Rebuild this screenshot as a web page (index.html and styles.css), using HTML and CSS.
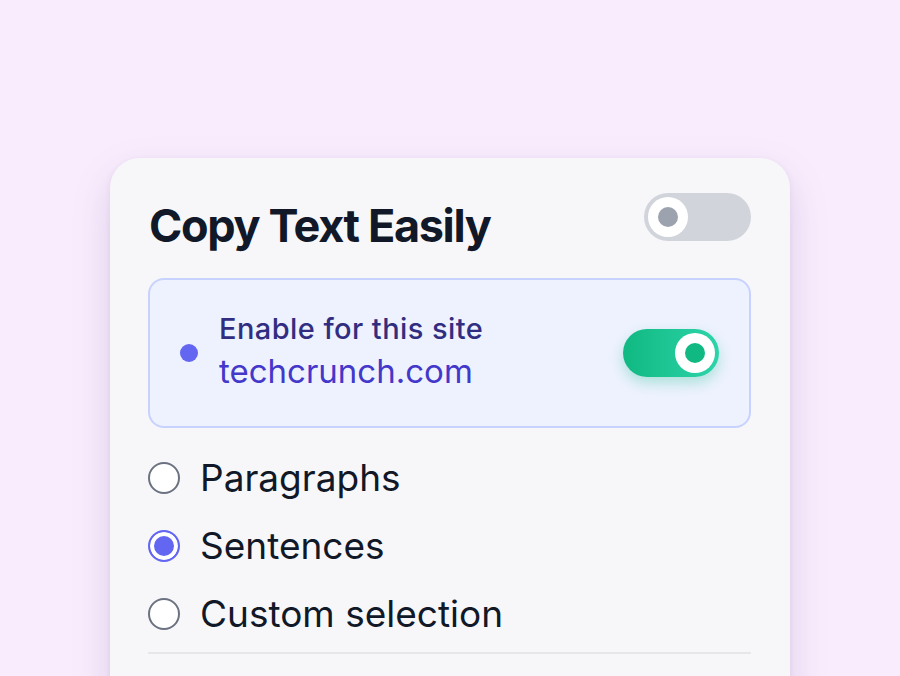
FILE: index.html
```html
<!DOCTYPE html>
<html>
<head>
<meta charset="utf-8">
<link rel="stylesheet" href="styles.css">
</head>
<body>
<div class="card">
  <div class="header">
    <h1 class="title">Copy Text Easily</h1>
    <div class="toggle toggle-off"><span class="knob"></span></div>
  </div>
  <div class="site-box">
    <span class="site-dot"></span>
    <div class="site-text">
      <div class="site-label">Enable for this site</div>
      <div class="site-name">techcrunch.com</div>
    </div>
    <div class="toggle toggle-on"><span class="knob"></span></div>
  </div>
  <div class="options">
    <label class="option"><span class="radio"></span><span>Paragraphs</span></label>
    <label class="option"><span class="radio radio-checked"></span><span>Sentences</span></label>
    <label class="option"><span class="radio"></span><span>Custom selection</span></label>
  </div>
  <div class="divider"></div>
</div>
</body>
</html>
```
FILE: styles.css
```css
* { box-sizing: border-box; }
html, body { margin: 0; height: 100%; }
body {
  background: #f9edfd;
  font-family: Inter, "Noto Sans", sans-serif;
  padding: 158px 110px 0;
  overflow: hidden;
}
.card {
  background: #f7f7fa;
  border-radius: 30px;
  box-shadow: 0 16px 40px rgba(90, 50, 130, 0.16), 0 2px 6px rgba(90, 50, 130, 0.08);
  padding: 35px 39px 0 38px;
  height: 600px;
}
.header {
  display: flex;
  align-items: center;
  justify-content: space-between;
  height: 48px;
}
.title {
  margin: 0;
  font-size: 45px;
  font-weight: 700;
  letter-spacing: -0.03em;
  color: #111827;
  line-height: 1;
  padding-top: 16px;
  padding-left: 1px;
}
.toggle {
  position: relative;
  border-radius: 24px;
  flex: none;
}
.toggle-off {
  width: 107px;
  height: 48px;
  background: #d1d5db;
}
.toggle-off .knob {
  position: absolute;
  left: 4px;
  top: 4px;
  width: 40px;
  height: 40px;
  border-radius: 50%;
  background: #fff;
}
.toggle-off .knob::after {
  content: "";
  position: absolute;
  left: 10px;
  top: 10px;
  width: 20px;
  height: 20px;
  border-radius: 50%;
  background: #9ca3af;
}
.toggle-on {
  width: 96px;
  height: 48px;
  background: linear-gradient(90deg, #10b981, #2dd4aa);
  box-shadow: 0 6px 14px rgba(16, 185, 129, 0.3);
}
.toggle-on .knob {
  position: absolute;
  right: 4px;
  top: 4px;
  width: 40px;
  height: 40px;
  border-radius: 50%;
  background: #fff;
}
.toggle-on .knob::after {
  content: "";
  position: absolute;
  left: 10px;
  top: 10px;
  width: 20px;
  height: 20px;
  border-radius: 50%;
  background: #10b981;
}
.site-box {
  margin-top: 37px;
  height: 150px;
  border: 2px solid #c7d2fe;
  background: #eef2ff;
  border-radius: 16px;
  display: flex;
  align-items: center;
  padding: 0 30px 0 30px;
}
.site-dot {
  width: 18px;
  height: 18px;
  border-radius: 50%;
  background: #6366f1;
  flex: none;
}
.site-text {
  flex: 1;
  margin-left: 21px;
  margin-top: -2px;
}
.site-label {
  font-size: 29px;
  font-weight: 500;
  color: #312e81;
  line-height: 36px;
  letter-spacing: 0.015em;
}
.site-name {
  font-size: 33px;
  font-weight: 400;
  color: #4338ca;
  line-height: 44px;
  padding-top: 2px;
}
.options {
  display: flex;
  flex-direction: column;
  gap: 20px;
  margin-top: 26px;
}
.option {
  display: flex;
  align-items: center;
  gap: 20px;
  font-size: 37px;
  color: #111827;
  line-height: 48px;
}
.radio {
  width: 32px;
  height: 32px;
  border-radius: 50%;
  border: 2px solid #6b7280;
  background: #fff;
  flex: none;
}
.radio-checked {
  border-color: #6366f1;
  background: #6366f1;
  box-shadow: inset 0 0 0 4px #fff;
}
.divider {
  margin-top: 14px;
  height: 2px;
  background: #e5e7eb;
}
```
